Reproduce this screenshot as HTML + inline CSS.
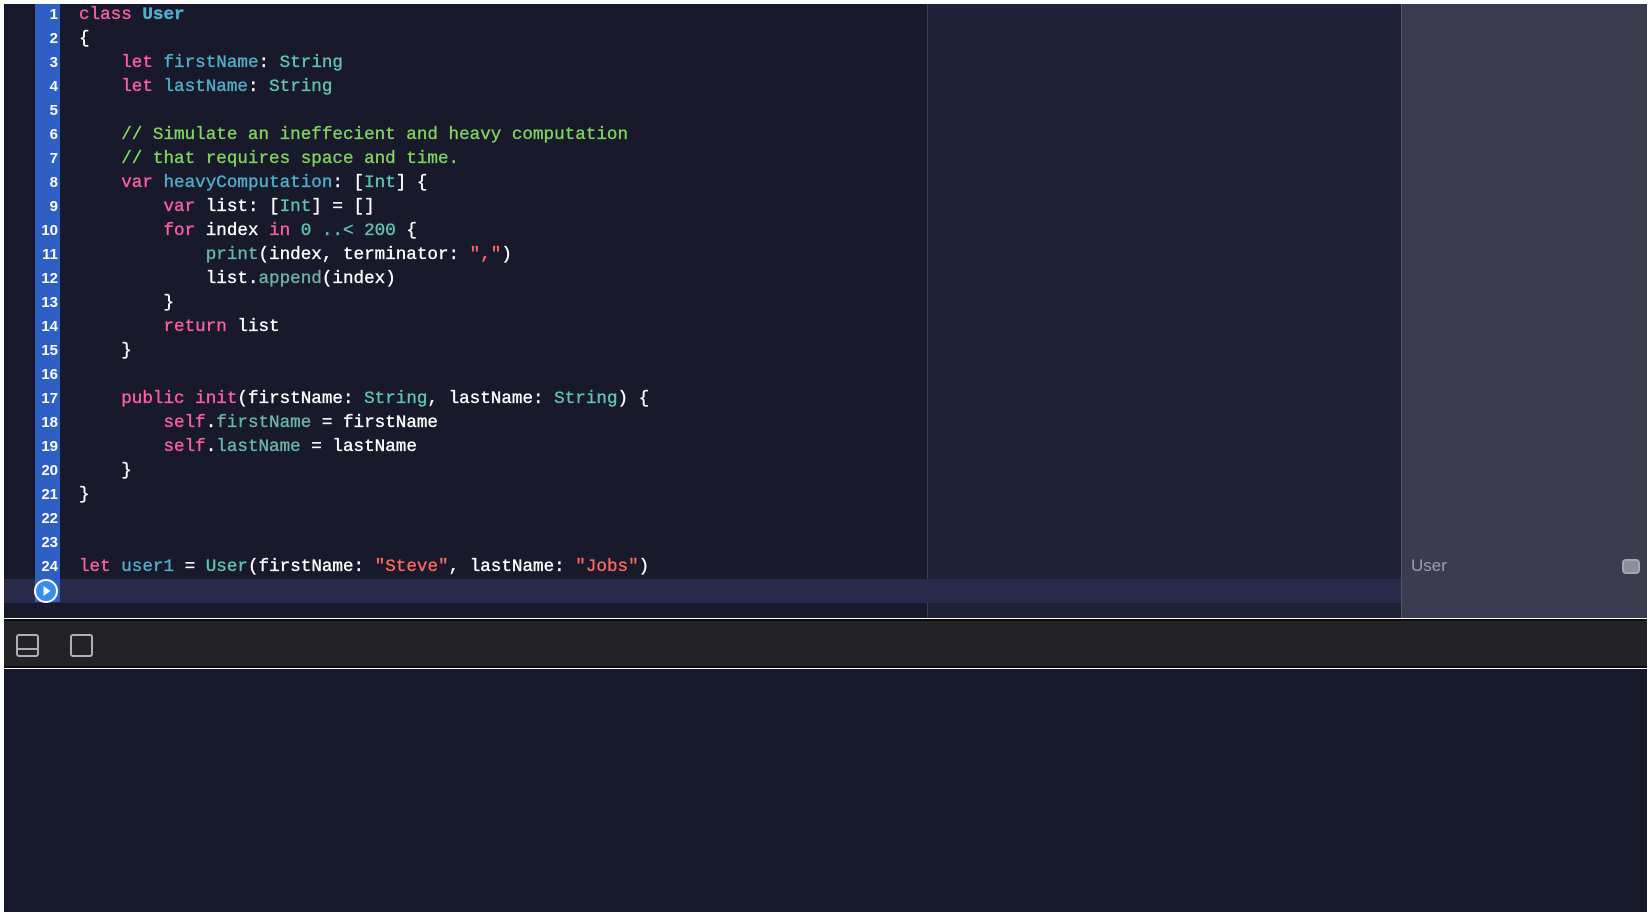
<!DOCTYPE html>
<html><head><meta charset="utf-8"><style>
*{margin:0;padding:0;box-sizing:border-box}
body{width:1650px;height:920px;background:#fff;position:relative;overflow:hidden;font-family:"Liberation Mono",monospace}
.ed{position:absolute;left:4px;top:4px;width:923px;height:614px;background:#181a2c}
.mid{position:absolute;left:927px;top:4px;width:474px;height:614px;background:#1e2137;border-left:1px solid #3a3d55}
.rp{position:absolute;left:1401px;top:4px;width:246px;height:614px;background:#3b3c50;border-left:1px solid #55566a}
.hl{position:absolute;left:4px;top:579px;width:1397px;height:24px;background:#272a4b}
.gut{position:absolute;left:35px;top:4px;width:25px;height:598px;background:#2d5fc4}
.ln{position:absolute;left:34px;width:24px;text-align:right;font:bold 15px "Liberation Sans",sans-serif;color:#fff;line-height:24px}
.code{position:absolute;left:79px;top:3px;font-size:17.6px;line-height:24px;color:#fff;white-space:pre;-webkit-text-stroke:0.35px currentColor}
.k{color:#fc5fa3}.d{color:#4eb0cc}.t{color:#5ec4b6}.c{color:#7fd45c}.s{color:#fc6a5d}.f{color:#67b7a4}
.tb{position:absolute;left:4px;top:619px;width:1643px;height:49px;background:#232327;border-top:2px solid #0c0c0e;border-bottom:2px solid #0c0c0e}
.con{position:absolute;left:4px;top:669px;width:1643px;height:243px;background:#16182c}
.play{position:absolute;left:34px;top:579px;width:24px;height:24px;border-radius:50%;background:#3b8cf0;border:2px solid #fff}
</style></head><body>
<div class="ed"></div><div class="mid"></div><div class="rp"></div>
<div class="hl"></div>
<div class="gut"></div>
<div class="ln" style="top:3px">1</div><div class="ln" style="top:27px">2</div><div class="ln" style="top:51px">3</div><div class="ln" style="top:75px">4</div><div class="ln" style="top:99px">5</div><div class="ln" style="top:123px">6</div><div class="ln" style="top:147px">7</div><div class="ln" style="top:171px">8</div><div class="ln" style="top:195px">9</div><div class="ln" style="top:219px">10</div><div class="ln" style="top:243px">11</div><div class="ln" style="top:267px">12</div><div class="ln" style="top:291px">13</div><div class="ln" style="top:315px">14</div><div class="ln" style="top:339px">15</div><div class="ln" style="top:363px">16</div><div class="ln" style="top:387px">17</div><div class="ln" style="top:411px">18</div><div class="ln" style="top:435px">19</div><div class="ln" style="top:459px">20</div><div class="ln" style="top:483px">21</div><div class="ln" style="top:507px">22</div><div class="ln" style="top:531px">23</div><div class="ln" style="top:555px">24</div>
<div class="play"><svg width="20" height="20" viewBox="0 0 20 20" style="position:absolute;left:0;top:0"><path d="M7.5 5 L14.5 10 L7.5 15 Z" fill="#fff"/></svg></div>
<div class="code"><span class="k">class</span> <span class="d" style="font-weight:bold">User</span>
{
    <span class="k">let</span> <span class="d">firstName</span>: <span class="t">String</span>
    <span class="k">let</span> <span class="d">lastName</span>: <span class="t">String</span>

    <span class="c">// Simulate an ineffecient and heavy computation</span>
    <span class="c">// that requires space and time.</span>
    <span class="k">var</span> <span class="d">heavyComputation</span>: [<span class="t">Int</span>] {
        <span class="k">var</span> list: [<span class="t">Int</span>] = []
        <span class="k">for</span> index <span class="k">in</span> <span class="t">0</span> <span class="t">..&lt;</span> <span class="t">200</span> {
            <span class="f">print</span>(index, terminator: <span class="s">","</span>)
            list.<span class="f">append</span>(index)
        }
        <span class="k">return</span> list
    }

    <span class="k">public</span> <span class="k">init</span>(firstName: <span class="t">String</span>, lastName: <span class="t">String</span>) {
        <span class="k">self</span>.<span class="f">firstName</span> = firstName
        <span class="k">self</span>.<span class="f">lastName</span> = lastName
    }
}


<span class="k">let</span> <span class="d">user1</span> = <span class="t">User</span>(firstName: <span class="s">"Steve"</span>, lastName: <span class="s">"Jobs"</span>)</div>
<div style="position:absolute;left:1411px;top:556px;font:17px 'Liberation Sans',sans-serif;color:#9d9eac">User</div>
<div style="position:absolute;left:1622px;top:559px;width:18px;height:15px;border:2px solid #a5a6b2;border-radius:4px;background:#8d8e9a"></div>
<div class="tb">
<svg width="120" height="45" style="position:absolute;left:0;top:0"><rect x="13" y="14" width="21" height="21" rx="2" fill="none" stroke="#b0b0b4" stroke-width="2"/><line x1="13" y1="28" x2="34" y2="28" stroke="#b0b0b4" stroke-width="2"/><rect x="67" y="14" width="21" height="21" rx="2" fill="none" stroke="#b0b0b4" stroke-width="2"/></svg>
</div>
<div class="con"></div>
</body></html>
